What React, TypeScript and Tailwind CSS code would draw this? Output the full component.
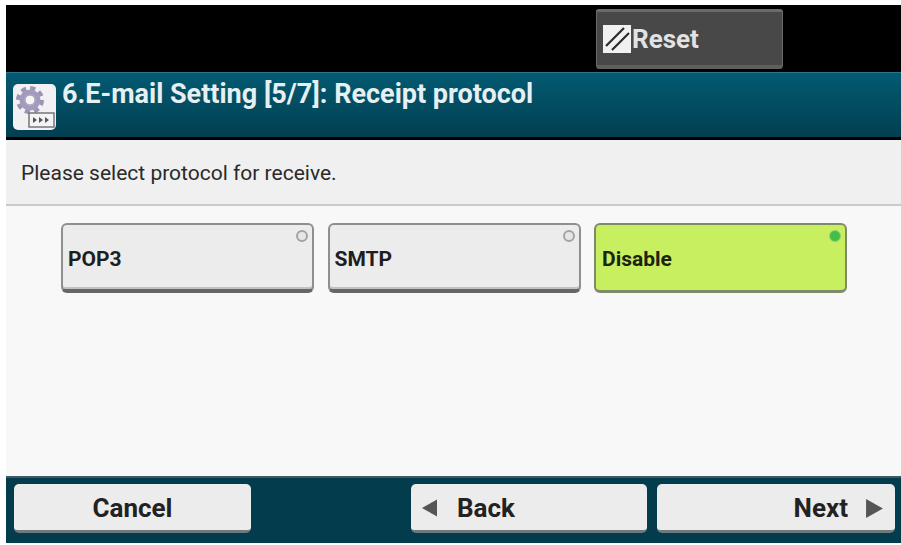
import type { ReactNode } from "react";

const font = "font-['Roboto','Liberation_Sans',sans-serif]";

function SettingsIcon() {
    return (
        <div className="ml-[7px] mt-[11px] flex h-[46px] w-[43px] shrink-0 rounded-[5px] bg-[#f1f0f3]">
            <svg viewBox="0 0 43 46" className="h-full w-full">
                <circle cx="17" cy="16" r="12" fill="none" stroke="#9d93b6" strokeWidth="4" strokeDasharray="5.2 4.2" />
                <circle cx="17" cy="16" r="8" fill="none" stroke="#a49bbc" strokeWidth="5" />
                <circle cx="17" cy="16" r="5" fill="#f6f6f8" stroke="#7f7699" strokeWidth="0.8" />
                <rect x="16" y="29" width="25" height="14" fill="#f4f4f4" stroke="#77767c" strokeWidth="1.5" />
                <path d="M20 33l4 3-4 3zM26 33l4 3-4 3zM32 33l4 3-4 3z" fill="#55555c" />
            </svg>
        </div>
    );
}

function ResetIcon() {
    return (
        <svg viewBox="0 0 28 28" className="h-[28px] w-[28px] shrink-0">
            <rect width="28" height="28" fill="#f1f1f1" />
            <path d="M3 21L21 3M9 25L26 8" stroke="#2b2b2b" strokeWidth="2.2" fill="none" />
        </svg>
    );
}

function OptionButton({ label, selected = false }: { label: string; selected?: boolean }) {
    return (
        <div
            className={
                selected
                    ? "relative flex h-[70px] w-[253px] items-center rounded-[6px] border-2 border-b-[3px] border-[#7f8a68] bg-[#c8ef60] pl-[6px] pt-[5px] text-[21px] font-bold text-[#1c2410]"
                    : "relative flex h-[70px] w-[253px] items-center rounded-[6px] border-2 border-b-[4px] border-[#8f8f8f] border-b-[#666666] bg-[#ececec] pl-[5px] pt-[6px] text-[21px] font-bold text-[#1e1e1e] shadow-[inset_0_-2px_0_#c2c2c2]"
            }
        >
            {label}
            <span
                className={
                    selected
                        ? "absolute right-[4px] top-[5px] h-[12px] w-[12px] rounded-full border border-[#8fd27a] bg-[#45bd48]"
                        : "absolute right-[4px] top-[5px] h-[12px] w-[12px] rounded-full border-2 border-[#a3a3a3] bg-[#e6e6e6]"
                }
            />
        </div>
    );
}

function FooterButton({ width, children, className }: { width: string; children: ReactNode; className: string }) {
    return (
        <div
            className={`${width} ${className} flex h-[49px] items-center rounded-[5px] border-b-[3px] border-[#6f7a7c] bg-[#ececec] pt-[2px] text-[26px] font-bold text-[#222222]`}
        >
            {children}
        </div>
    );
}

export default function App() {
    return (
        <div className={`${font} h-[545px] w-[901px] overflow-hidden bg-white pl-[6px] pt-[5px]`}>
            <div className="flex h-[538px] w-[895px] flex-col bg-[#f8f8f8]">
                <div className="flex h-[67px] shrink-0 bg-black pl-[590px] pt-[4px]">
                    <div className="flex h-[60px] w-[187px] items-center gap-[1px] rounded-[3px] border-t-[3px] border-b-[4px] border-x border-[#6b6b6b] border-b-[#5f5f5f] bg-[#484848] pl-[6px] pt-[1px] text-[26px] font-bold text-[#e2e2e2]">
                        <ResetIcon />
                        Reset
                    </div>
                </div>

                <div className="flex h-[68px] shrink-0 border-t border-b-[3px] border-t-[#2c7488] border-b-black bg-gradient-to-b from-[#035a72] to-[#023f51]">
                    <SettingsIcon />
                    <div className="ml-[6px] pt-[5px] text-[27px] font-bold leading-[32px] text-[#e6eff2]">
                        6.E-mail Setting [5/7]: Receipt protocol
                    </div>
                </div>

                <div className="flex h-[66px] shrink-0 items-center border-b-2 border-[#c9c9c9] bg-[#f0f0f0] pl-[15px] pt-[3px] text-[21px] text-[#2a2a2a]">
                    Please select protocol for receive.
                </div>

                <div className="flex-1 pl-[55px] pt-[17px]">
                    <div className="flex gap-[13.5px]">
                        <OptionButton label="POP3" />
                        <OptionButton label="SMTP" />
                        <OptionButton label="Disable" selected />
                    </div>
                </div>

                <div className="flex h-[67px] shrink-0 items-start border-t-2 border-[#3f5a64] bg-[#033c4c] pt-[6px]">
                    <FooterButton width="w-[237px]" className="ml-[8px] justify-center">
                        Cancel
                    </FooterButton>
                    <FooterButton width="w-[236px]" className="ml-[160px] gap-[20px] pl-[11px]">
                        <svg viewBox="0 0 16 18" className="h-[18px] w-[15px]">
                            <path d="M16 0L0 9l16 9z" fill="#555555" />
                        </svg>
                        Back
                    </FooterButton>
                    <FooterButton width="w-[238px]" className="ml-[10px] justify-end gap-[18px] pr-[12px]">
                        Next
                        <svg viewBox="0 0 16 18" className="h-[19px] w-[17px]">
                            <path d="M0 0l16 9L0 18z" fill="#555555" />
                        </svg>
                    </FooterButton>
                </div>
            </div>
        </div>
    );
}
